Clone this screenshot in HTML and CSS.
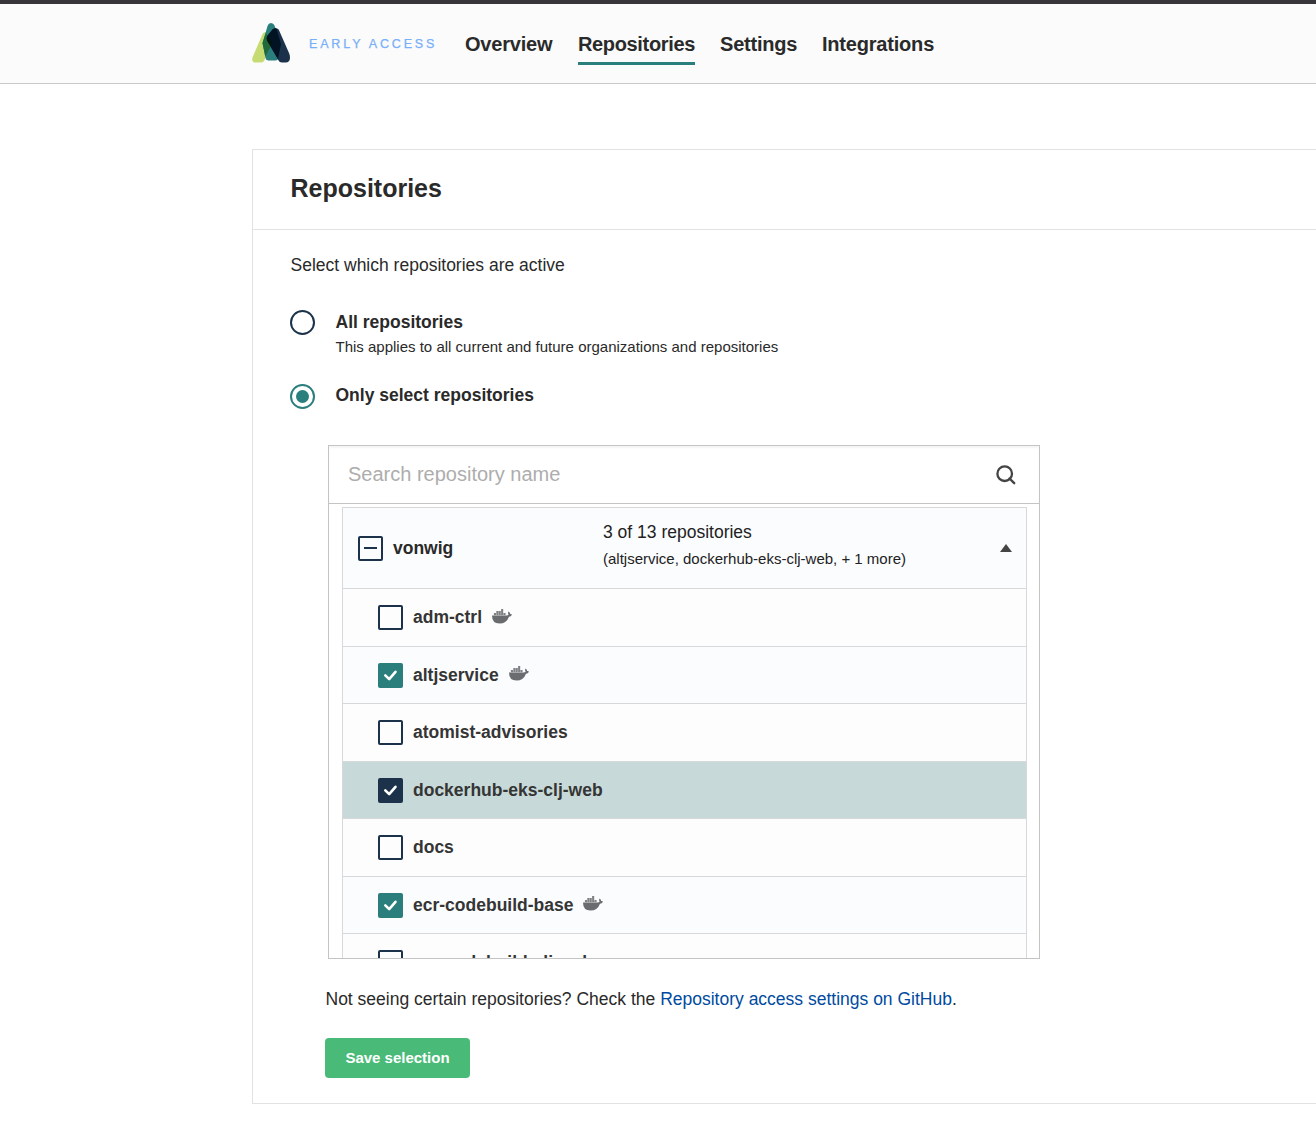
FILE: index.html
```html
<!DOCTYPE html>
<html lang="en">
<head>
<meta charset="utf-8">
<title>Repositories</title>
<link rel="stylesheet" href="styles.css">
</head>
<body>
<svg class="defs" aria-hidden="true">
  <symbol id="check" viewBox="0 0 25 25"><path d="M7.3 12.3l3.9 3.900 6.300-7.400" fill="none" stroke="#fff" stroke-width="2.600" stroke-linecap="round" stroke-linejoin="round"/></symbol>
  <symbol id="whale" viewBox="0 0 20 15"><path fill="#6b6c6f" d="M0 6.500H14.500Q16 6.500 16.600 5.800Q15.500 4.200 16.500 2.600Q18 3.600 18.200 5Q19.300 4.800 20 5.400Q19.200 7.700 17 7.700Q14.500 14.500 7.500 14.500Q0 14.500 0 6.500Z"/><path fill="#808184" d="M1.900 4.100H4v2.200H1.900zM4.300 4.100h2.100v2.200H4.300zM6.700 4.100h2.100v2.200H6.700zM9.100 4.100h2.100v2.200H9.100zM11.500 4.100h2.100v2.200h-2.100zM4.300 2.100h2.100v1.800H4.300zM6.700 2.100h2.100v1.800H6.700zM9.100 2.100h2.100v1.800H9.100zM9.100 0h2.100v1.900H9.100z"/></symbol>
</svg>
<header class="topbar">
  <svg class="logo" viewBox="0 0 38 40">
    <path d="M14.500 9.500q-2.800-1-4 1.500L.5 34.500Q-.8 39.500 4 39.500h5q2.500 0 3.500-2.500L20 20z" fill="#c6dc72"/>
    <path d="M19 0q-2.500 0-3.300 2.500L10.500 20l3 15q.6 2.500 3 2.500h7q2.500 0 3-3L29 21 22.500 2.500Q21.500 0 19 0z" fill="#2a7e7c"/>
    <path d="M14 9.500l-3.500 10.500 2.800 13.500L20 21l-5-8.500z" fill="#20693b"/>
    <path d="M20.500 6.500q3-2.500 6.200 0L37 30q1 2 1 4.500 0 5-4.500 5H30q-2.500 0-3.800-2.500L15 17.500q-1-2.500.5-5z" fill="#1c324b"/>
    <path d="M20.500 6.500q2-1.700 4-1L29 21l-3 15L15 17.500q-1-2.500.5-5z" fill="#021423"/>
    <path d="M15 13l5.500 7-1.500 3-4-6z" fill="#00150b"/>
  </svg>
  <span class="early">EARLY ACCESS</span>
  <nav class="nav">
    <a class="nav-overview">Overview</a>
    <a class="nav-repos active">Repositories</a>
    <a class="nav-settings">Settings</a>
    <a class="nav-integrations">Integrations</a>
  </nav>
</header>
<main class="card">
  <h1 class="title">Repositories</h1>
  <div class="content">
    <p class="intro">Select which repositories are active</p>
    <div class="option option-all">
      <span class="radio"></span>
      <div><div class="label">All repositories</div><div class="hint">This applies to all current and future organizations and repositories</div></div>
    </div>
    <div class="option">
      <span class="radio selected"></span>
      <div class="label">Only select repositories</div>
    </div>
    <section class="picker">
      <div class="search">
        <span>Search repository name</span>
        <svg class="search-icon" viewBox="0 0 20 20"><circle cx="8.700" cy="8.700" r="7.300" fill="none" stroke="#444" stroke-width="2.300"/><path d="M13.500 13.500l4.700 4.700" stroke="#444" stroke-width="2.400" stroke-linecap="round"/></svg>
      </div>
      <div class="list">
        <div class="org">
          <span class="box partial"></span>
          <span class="org-name">vonwig</span>
          <div class="summary"><div>3 of 13 repositories</div><div class="detail">(altjservice, dockerhub-eks-clj-web, + 1 more)</div></div>
          <span class="arrow"></span>
        </div>
        <div class="row"><span class="box"></span>adm-ctrl<svg class="whale"><use href="#whale"/></svg></div>
        <div class="row tint"><span class="box on"><svg><use href="#check"/></svg></span>altjservice<svg class="whale"><use href="#whale"/></svg></div>
        <div class="row"><span class="box"></span>atomist-advisories</div>
        <div class="row hover"><span class="box on"><svg><use href="#check"/></svg></span>dockerhub-eks-clj-web</div>
        <div class="row"><span class="box"></span>docs</div>
        <div class="row tint"><span class="box on"><svg><use href="#check"/></svg></span>ecr-codebuild-base<svg class="whale"><use href="#whale"/></svg></div>
        <div class="row"><span class="box"></span>ecr-codebuild-clj-web</div>
      </div>
    </section>
    <p class="note">Not seeing certain repositories? Check the <a>Repository access settings on GitHub</a>.</p>
    <button class="save">Save selection</button>
  </div>
</main>
</body>
</html>
```
FILE: styles.css
```css
* { box-sizing: border-box; }
body {
  margin: 0;
  background: #fff;
  color: #2a2a2a;
  font: 17.5px/25px "Liberation Sans", Arial, sans-serif;
  overflow: hidden;
}
h1, p { margin: 0; }
.defs { display: none; }
.topbar {
  display: flex;
  height: 84px;
  padding-left: 252px;
  border-top: 4px solid #38363b;
  border-bottom: 1px solid #c9c9c9;
  background: #fbfbfb;
}
.logo { width: 38px; height: 40px; margin-top: 19px; }
.early {
  width: 155px;
  margin-left: 19px;
  padding-top: 28px;
  color: #77aff8;
  font-size: 12.5px;
  letter-spacing: 2.85px;
  -webkit-text-stroke: .25px #77aff8;
  white-space: nowrap;
}
.nav { display: flex; gap: 25px; margin-left: 1px; padding-top: 26px; }
.nav a {
  height: 35px;
  line-height: 28px;
  font-size: 20px;
  font-weight: bold;
  letter-spacing: -.2px;
  white-space: nowrap;
}
.nav-overview { width: 88px; }
.nav-repos { width: 117px; }
.nav-settings { width: 77px; }
.nav-integrations { width: 113px; }
.nav .active { border-bottom: 3px solid #2a7e7c; letter-spacing: -.35px; }
.card {
  width: 1100px;
  height: 955px;
  margin: 65px 0 0 252px;
  border: 1px solid #e2e2e2;
}
.title {
  height: 80px;
  padding: 23px 0 0 37.5px;
  border-bottom: 1px solid #e2e2e2;
  font-size: 25px;
  line-height: 31px;
}
.content { padding: 23px 0 0 37px; }
.intro { padding-left: .5px; }
.option { display: flex; gap: 20.5px; }
.option-all { height: 50px; margin-top: 32px; }
.option + .option { margin-top: 23px; }
.radio {
  display: flex;
  align-items: center;
  justify-content: center;
  width: 25px;
  height: 25px;
  border: 2px solid #1c324b;
  border-radius: 50%;
}
.selected { margin-top: 1px; border-color: #2a7e7c; }
.selected::after {
  content: "";
  width: 13px;
  height: 13px;
  border-radius: 50%;
  background: #2a7e7c;
}
.label, .org-name, .row { font-weight: bold; }
.hint { font-size: 15px; line-height: 23px; }
.picker {
  width: 712px;
  height: 514px;
  margin: 36px 0 0 38px;
  border: 1px solid #c4c4c4;
  overflow: hidden;
}
.search {
  display: flex;
  align-items: center;
  justify-content: space-between;
  height: 58px;
  padding: 0 23px 0 19px;
  border-bottom: 1px solid #c4c4c4;
  box-shadow: inset 0 2px 2px #f5f5f5;
  color: #adadad;
  font-size: 20px;
}
.search-icon { width: 20px; height: 20px; }
.list { width: 685px; margin: 3px 0 0 13px; border: 1px solid #d7d8da; }
.org { display: flex; height: 80px; padding-left: 15px; background: #fbfcfe; }
.box {
  flex: none;
  width: 25px;
  height: 25px;
  border: 2px solid #1c324b;
  border-radius: 2px;
}
.partial {
  display: flex;
  justify-content: center;
  margin-top: 28px;
  padding-top: 9px;
}
.partial::after { content: ""; width: 13px; height: 2px; background: #1c324b; }
.org-name { width: 210px; margin: 28px 0 0 10px; }
.summary { width: 397px; padding-top: 12px; color: #222; }
.detail { padding-top: 1px; font-size: 15px; }
.arrow {
  width: 12px;
  height: 8px;
  margin-top: 36px;
  background: #444;
  clip-path: polygon(50% 0, 100% 100%, 0 100%);
}
.row {
  display: flex;
  align-items: center;
  height: 57.5px;
  padding: 1px 0 0 35px;
  border-top: 1px solid #d7d8da;
  background: #fdfdfd;
  color: #353535;
}
.row .box { margin-right: 10px; }
.tint { background: #fbfcfe; }
.hover { background: #c7dad9; }
.on { border: 0; background: #2a7e7c; }
.hover .on { background: #1c324b; }
.on svg { display: block; width: 25px; height: 25px; }
.whale { width: 20px; height: 15px; margin: 0 0 3px 10px; }
.note { margin: 28px 0 0 35.5px; }
.note a { color: #004a9f; }
.save {
  display: block;
  width: 145px;
  height: 40px;
  margin: 26px 0 0 35px;
  padding: 0 0 2px;
  border: 0;
  border-radius: 4px;
  background: #49ba78;
  color: #fff;
  font: bold 15px "Liberation Sans", Arial, sans-serif;
}
```
